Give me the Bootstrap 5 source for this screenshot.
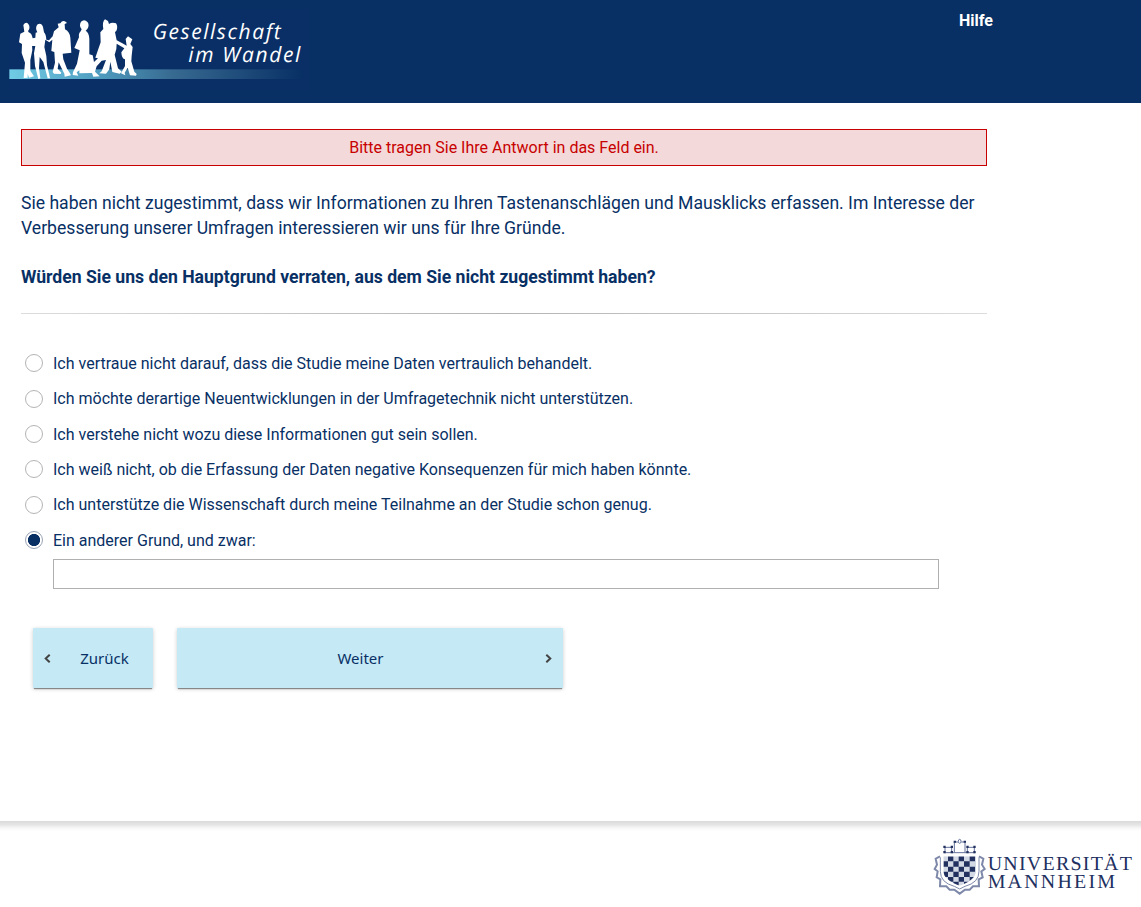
<!DOCTYPE html>
<html lang="de">
<head>
<meta charset="utf-8">
<meta name="viewport" content="width=device-width, initial-scale=1">
<title>Gesellschaft im Wandel</title>
<link href="https://cdn.jsdelivr.net/npm/bootstrap@5.3.0/dist/css/bootstrap.min.css" rel="stylesheet">
<style>
:root{--navy:#083065}
body{font-family:Roboto,sans-serif;color:var(--navy);font-size:16px;line-height:24px;background:#fff}
.site-head{background:var(--navy);height:103px}
.help-link{color:#fff;font-weight:700;margin:9px 148px 0 0}
.survey{width:966px;margin-left:21px;height:718px;padding-top:26px}
.notice{border:1px solid #c80000;background:#f3d9d9;color:#c80000;height:37px;line-height:35px;border-radius:0}
.intro{font-size:17.6px;line-height:25px;margin:25px 0 0;white-space:nowrap}
.question{font-size:17.6px;line-height:25px;font-weight:700;margin:24px 0 0}
.divider{height:1px;margin:23px 0 32.15px;background:linear-gradient(90deg,#dcdcdc,#b4b4b4 50%,#dcdcdc)}
.choice{height:35.35px;padding-left:4px;gap:10px}
.choice .form-check-input{width:18px;height:18px;margin:-.9px 0 0;border:1px solid #b4b4b4;box-shadow:none}
.choice .form-check-input:checked{background:radial-gradient(circle,var(--navy) 5.7px,#fff 6.5px);border:1.5px solid #9aa3b5}
.other-field{width:886px;height:30px;margin:1px 0 0 32px;border:1px solid #b0b0b0;border-radius:0;padding:2px 6px}
.nav-row{gap:24px;margin:39px 0 0 12px}
.nav-btn{height:60px;background:#c5e9f5;color:var(--navy);border:0;border-radius:1px;font:15px/60px "Noto Sans",sans-serif;box-shadow:0 2px 1px -1px rgba(0,0,0,.4),0 1px 4px rgba(0,0,0,.2);padding:0 11px}
.nav-btn:hover{background:#b5dfed}
.back-btn{width:120px}
.next-btn{width:386px}
.next-btn span{padding-right:12px}
.site-foot{height:86px;background:linear-gradient(#dadada,#e6e6e6 4px,#f7f7f7 7px,#fff 10px)}
</style>
</head>
<body>
<header class="site-head d-flex justify-content-between align-items-start">
<svg width="320" height="103" viewBox="0 0 960 309" role="img" aria-label="Gesellschaft im Wandel">
<defs><linearGradient id="band"><stop stop-color="#70cbe4"/><stop offset=".3" stop-color="#4f9dc0"/><stop offset=".55" stop-color="#386b92"/><stop offset="1" stop-color="#083065"/></linearGradient></defs>
<rect x="27" y="27" width="900" height="243" fill="#0b2f68" opacity=".6"/>
<rect x="28" y="208" width="880" height="29" fill="url(#band)"/>
<g fill="#fff">
<path d="M70 75Q79 62 87 75Q91 86 84 93L86 97Q95 99 98 115L106 113L107 98L112 97Q104 83 113 73Q124 67 129 81L132 97Q138 103 139 119L147 121L158 109L162 94L176 82L173 71L181 70Q187 60 197 65L201 69L194 72L195 88Q208 93 211 113L214 158L188 161L190 178L201 206L209 218L213 226L194 230L193 221L176 187L173 206L184 218L182 222L162 221L158 216L165 188L163 156L154 153L157 119L148 127L136 119L133 141L139 168L141 196L148 224L150 235L143 235L130 186L119 171L117 205L121 235L115 237L105 198L102 160L106 138L91 137L95 117L97 151L91 180L91 212L102 229L87 233L83 221L83 233L71 234L75 188L65 159L66 132L57 127L61 101L73 95Z"/>
<path d="M243 65Q253 55 263 67Q269 76 262 87L257 92Q267 97 268 117L268 163L278 166L282 186L294 175L286 173L302 127L301 97L310 87Q306 65 315 58L324 63L327 72Q336 66 348 70Q354 78 350 91L345 97L350 121L367 130L380 137L377 117L384 109L397 118L391 132L398 141L395 167L394 184L403 215L410 222L408 227L390 226L383 203L374 218L376 226L363 220L375 198L375 178Q365 177 364 157L373 145L350 131L349 147L344 164L354 205L365 215L359 221L337 216L331 185L328 208L318 221L298 220L305 214L318 180L305 182L290 199L285 215L299 229L280 230L276 219L238 220L238 211L230 217L235 227L218 225L219 217L231 191L239 151L223 144L237 112Q235 100 242 94L245 88Q236 77 243 65Z"/>
</g>
<g fill="#fff" font-family="'Open Sans',sans-serif" font-style="italic" font-size="63" text-rendering="geometricPrecision">
<text x="458" y="118" textLength="384">Gesellschaft</text><text x="565" y="187" textLength="336">im Wandel</text>
</g>
</svg>
<a class="help-link text-decoration-none" href="#">Hilfe</a>
</header>
<main class="survey">
<div class="notice text-center">Bitte tragen Sie Ihre Antwort in das Feld ein.</div>
<p class="intro">Sie haben nicht zugestimmt, dass wir Informationen zu Ihren Tastenanschlägen und Mausklicks erfassen. Im Interesse der<br>Verbesserung unserer Umfragen interessieren wir uns für Ihre Gründe.</p>
<p class="question">Würden Sie uns den Hauptgrund verraten, aus dem Sie nicht zugestimmt haben?</p>
<div class="divider"></div>
<form>
<label class="choice d-flex align-items-center"><input class="form-check-input" type="radio" name="reason"><span>Ich vertraue nicht darauf, dass die Studie meine Daten vertraulich behandelt.</span></label>
<label class="choice d-flex align-items-center"><input class="form-check-input" type="radio" name="reason"><span>Ich möchte derartige Neuentwicklungen in der Umfragetechnik nicht unterstützen.</span></label>
<label class="choice d-flex align-items-center"><input class="form-check-input" type="radio" name="reason"><span>Ich verstehe nicht wozu diese Informationen gut sein sollen.</span></label>
<label class="choice d-flex align-items-center"><input class="form-check-input" type="radio" name="reason"><span>Ich weiß nicht, ob die Erfassung der Daten negative Konsequenzen für mich haben könnte.</span></label>
<label class="choice d-flex align-items-center"><input class="form-check-input" type="radio" name="reason"><span>Ich unterstütze die Wissenschaft durch meine Teilnahme an der Studie schon genug.</span></label>
<label class="choice d-flex align-items-center"><input class="form-check-input" type="radio" name="reason" checked><span>Ein anderer Grund, und zwar:</span></label>
<input class="form-control other-field" type="text" aria-label="Anderer Grund">
<div class="nav-row d-flex">
<button type="button" class="nav-btn back-btn d-flex align-items-center"><svg width="7" height="10" viewBox="0 0 7 10" fill="none" stroke="#444" stroke-width="2"><path d="M5.7 1.7 1.7 5.5l4 3.8"/></svg><span class="flex-fill text-center ps-3">Zurück</span></button>
<button type="button" class="nav-btn next-btn d-flex align-items-center"><span class="flex-fill text-center">Weiter</span><svg width="7" height="10" viewBox="0 0 7 10" fill="none" stroke="#444" stroke-width="2"><path d="m1.3 1.7 4 3.8-4 3.8"/></svg></button>
</div>
</form>
</main>
<footer class="site-foot d-flex justify-content-end">
<svg width="221" height="86" viewBox="0 33 663 258" role="img" aria-label="Universität Mannheim">
<defs><clipPath id="shield"><path d="M70 139H168V184Q166 211 119 227Q72 211 70 184Z"/></clipPath></defs>
<g fill="none" stroke="#7e89aa" stroke-width="6"><path d="M60 139 47 146 51 164 44 177 53 184 50 202 61 208 60 229 79 229 89 239 103 239 119 251 135 239 149 239 159 229 177 229 176 208 188 202 184 184 194 177 186 164 190 146 177 139"/><path d="M61 142V184Q61 218 103 229L119 237L135 229Q177 218 177 184V142" stroke-width="3"/></g>
<g clip-path="url(#shield)"><path fill="#d3d8e5" d="M68 137h102v94H68z"/><path fill="#22305f" d="M84 139h16v15H84zM116 139h16v15h-16zM149 139h16v15h-16zM70 154h14v16H70zM100 154h16v16h-16zM132 154h17v16h-17zM84 170h16v15H84zM116 170h16v15h-16zM149 170h16v15h-16zM70 185h14v16H70zM100 185h16v16h-16zM132 185h17v16h-17zM84 201h16v14H84zM116 201h16v14h-16zM149 201h16v14h-16zM100 215h16v15h-16zM132 215h17v15h-17z"/></g>
<path fill="none" stroke="#65729a" stroke-width="3" d="M72 128H166M75 127V112H95V127M142 127V112H163V127M103 128V96H114M124 96H135V128"/>
<ellipse cx="119" cy="94" rx="4" ry="6" fill="none" stroke="#65729a" stroke-width="3"/>
<path fill="#22305f" d="M70 107h7v7h-7zM92 107h7v7h-7zM139 107h7v7h-7zM160 107h7v7h-7zM101 92h7v6h-7zM131 92h7v6h-7zM70 123h7v7h-7zM92 123h7v7h-7zM139 123h7v7h-7zM160 123h7v7h-7z"/>
<g fill="#22305f" font-family="'Liberation Serif',serif" font-size="60" text-rendering="geometricPrecision"><text x="203" y="179" textLength="433" lengthAdjust="spacing">UNIVERSITÄT</text><text x="203" y="233" textLength="382" lengthAdjust="spacing">MANNHEIM</text></g>
</svg>
</footer>
<script src="https://cdn.jsdelivr.net/npm/bootstrap@5.3.0/dist/js/bootstrap.bundle.min.js"></script>
</body>
</html>
